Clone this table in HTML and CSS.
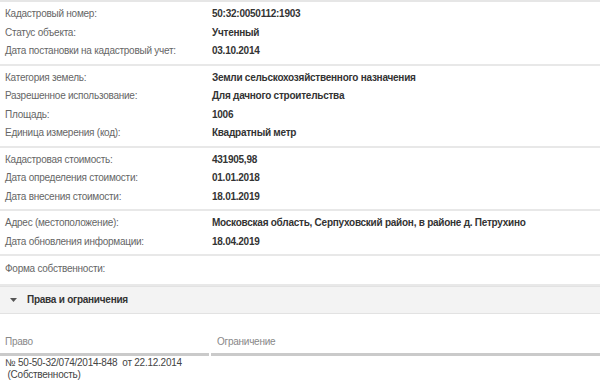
FILE: index.html
```html
<!DOCTYPE html>
<html lang="ru">
<head>
<meta charset="utf-8">
<link rel="stylesheet" href="styles.css">
</head>
<body>
<div class="page">
  <div class="group first">
    <div class="row"><span class="label">Кадастровый номер:</span><span class="value">50:32:0050112:1903</span></div>
    <div class="row"><span class="label">Статус объекта:</span><span class="value">Учтенный</span></div>
    <div class="row"><span class="label">Дата постановки на кадастровый учет:</span><span class="value">03.10.2014</span></div>
  </div>
  <div class="group">
    <div class="row"><span class="label">Категория земель:</span><span class="value">Земли сельскохозяйственного назначения</span></div>
    <div class="row"><span class="label">Разрешенное использование:</span><span class="value">Для дачного строительства</span></div>
    <div class="row"><span class="label">Площадь:</span><span class="value">1006</span></div>
    <div class="row"><span class="label">Единица измерения (код):</span><span class="value">Квадратный метр</span></div>
  </div>
  <div class="group">
    <div class="row"><span class="label">Кадастровая стоимость:</span><span class="value">431905,98</span></div>
    <div class="row"><span class="label">Дата определения стоимости:</span><span class="value">01.01.2018</span></div>
    <div class="row"><span class="label">Дата внесения стоимости:</span><span class="value">18.01.2019</span></div>
  </div>
  <div class="group">
    <div class="row"><span class="label">Адрес (местоположение):</span><span class="value">Московская область, Серпуховский район, в районе д. Петрухино</span></div>
    <div class="row"><span class="label">Дата обновления информации:</span><span class="value">18.04.2019</span></div>
  </div>
  <div class="group form">
    <div class="row"><span class="label">Форма собственности:</span><span class="value"></span></div>
  </div>
  <div class="section-head">
    <svg class="arrow" width="7" height="4" viewBox="0 0 7 4"><path d="M0 0H7L3.5 4Z" fill="#555"/></svg>
    <span>Права и ограничения</span>
  </div>
  <div class="rights">
    <div class="rights-head">
      <div class="col col-left">Право</div>
      <div class="col col-right">Ограничение</div>
    </div>
    <div class="rights-row">
      <div class="cell-left">№ 50-50-32/074/2014-848&nbsp; от 22.12.2014<br>&nbsp;(Собственность)</div>
      <div class="cell-right"></div>
    </div>
  </div>
</div>
</body>
</html>
```

FILE: styles.css
```css
html, body {
  margin: 0;
  padding: 0;
  background: #fff;
}
.page {
  font-family: "Liberation Sans", Arial, sans-serif;
  font-size: 10px;
  letter-spacing: -0.25px;
  color: #333;
  width: 600px;
  border-top: 2px solid #e6e6e6;
}
.group {
  padding: 3px 0 3px;
  border-bottom: 2px solid #e8e8e8;
}
.group.form {
  padding: 4px 0 5px;
}
.row {
  display: grid;
  grid-template-columns: 212px 1fr;
  height: 18.5px;
  line-height: 18.5px;
}
.label {
  padding-left: 5px;
  color: #666;
}
.value {
  font-weight: bold;
  color: #333;
}
.section-head {
  display: flex;
  align-items: center;
  gap: 10px;
  height: 26px;
  padding-left: 10px;
  background: #f3f3f3;
  border-top: 1px solid #e2e2e2;
  border-bottom: 1px solid #e2e2e2;
  font-weight: bold;
  color: #333;
}
.arrow {
  display: block;
}
.rights {
  padding-top: 20px;
}
.rights-head {
  display: grid;
  grid-template-columns: 209px 1fr;
  gap: 2px;
  color: #888;
}
.col {
  padding: 0 0 3px 5px;
  line-height: 16px;
  border-bottom: 3px solid #cacaca;
}
.col-right {
  padding-left: 6px;
}
.rights-row {
  display: grid;
  grid-template-columns: 209px 1fr;
  gap: 2px;
  border-bottom: 2px solid #e8e8e8;
  color: #444;
}
.cell-left {
  padding: 1px 0 1px 5px;
  line-height: 12px;
}
```
